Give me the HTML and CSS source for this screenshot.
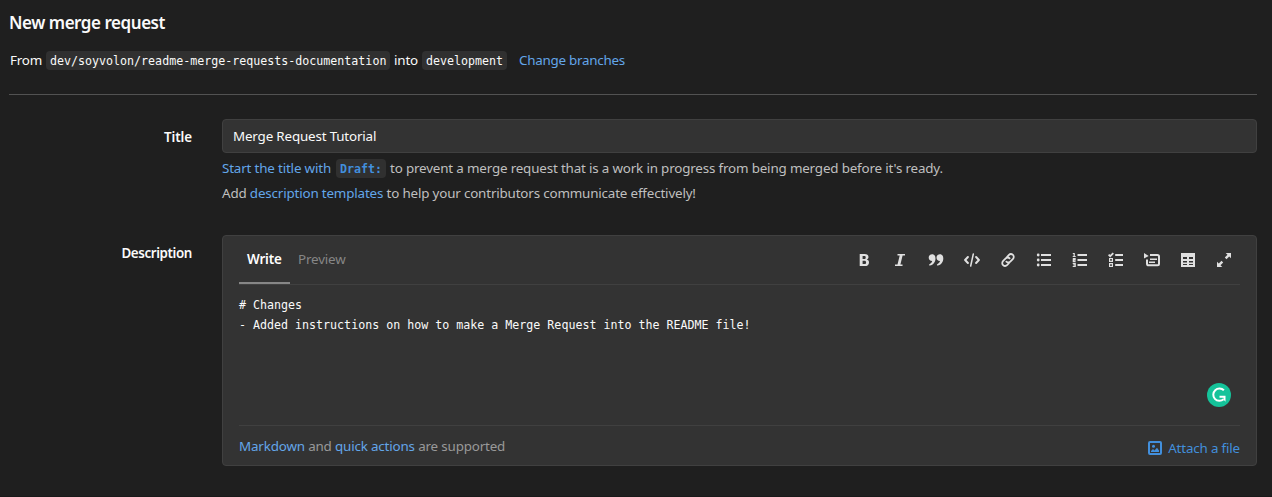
FILE: index.html
```html
<!DOCTYPE html>
<html lang="en">
<head>
<meta charset="utf-8">
<title>New merge request</title>
<link rel="stylesheet" href="styles.css">
</head>
<body>
<main class="page">
  <h1 class="page-title">New merge request</h1>
  <div class="branches"><span class="from">From</span><code class="code source">dev/soyvolon/readme-merge-requests-documentation</code><span class="into">into</span><code class="code target">development</code><a class="link change">Change branches</a></div>
  <form class="form">
    <div class="row title-row">
      <label class="label title-label">Title</label>
      <div class="field">
        <div class="input">Merge Request Tutorial</div>
        <p class="hint"><a class="link start">Start the title with</a><code class="code draft">Draft:</code><span class="prevent">to prevent a merge request that is a work in progress from being merged before it's ready.</span></p>
        <p class="hint second">Add <a class="link">description templates</a> to help your contributors communicate effectively!</p>
      </div>
    </div>
    <div class="row">
      <label class="label">Description</label>
      <div class="editor">
        <div class="header">
          <div class="tab active">Write</div>
          <div class="tab">Preview</div>
          <div class="toolbar">
            <svg class="icon" viewBox="0 0 16 16"><path fill-rule="evenodd" d="M3.7 2h5.100c2.300 0 3.700 1.100 3.700 3.100 0 1.200-.6 2-1.700 2.500 1.500.4 2.200 1.400 2.200 2.800 0 2.400-1.600 3.600-4.200 3.600H3.700zM6.600 4v2.900h1.600c1.100 0 1.500-.5 1.500-1.500S9.300 4 8.200 4zm0 4.800V12h1.800c1.200 0 1.700-.6 1.700-1.600 0-1.100-.5-1.600-1.700-1.600z"/></svg>
            <svg class="icon" viewBox="0 0 16 16"><path d="M5.500 2H13v1.600h-2.400L8.400 12.400h2.100V14H3v-1.600h2.500L7.700 3.600H5.500z"/></svg>
            <svg class="icon" viewBox="0 0 16 16"><path d="M4 2.200c2.100 0 3.500 1.500 3.500 4.100 0 3.800-2.100 6.700-5.600 7.200-.8.1-1.100-.9-.4-1.300 1.500-.7 2.400-1.800 2.700-3.200C2 9 .7 7.700.7 5.600 .7 3.600 2.100 2.200 4 2.200zM11.800 2.200c2.100 0 3.500 1.500 3.500 4.100 0 3.800-2.100 6.700-5.600 7.200-.8.1-1.100-.9-.4-1.300 1.500-.7 2.400-1.800 2.700-3.200-2.200 0-3.500-1.300-3.500-3.400 0-2 1.400-3.400 3.300-3.400z"/></svg>
            <svg class="icon line" viewBox="0 0 16 16"><path d="M3.900 5 1.100 8l2.800 3M12.100 5l2.800 3-2.800 3"/><path class="thin" d="M9.300 2 6.700 14"/></svg>
            <svg class="icon link-icon" viewBox="0 0 16 16"><path d="m6.500 5.500 2.200-2.400c1.200-1.200 3-1.300 4.200-.2s1.100 3-.1 4.200l-2.500 2.500c-1.200 1.200-2.900 1.200-3.900.1M9.500 10.500l-2.200 2.400c-1.200 1.200-3 1.300-4.200.2s-1.100-3 .1-4.200l2.500-2.500c1.200-1.200 2.900-1.200 3.900-.1"/></svg>
            <svg class="icon" viewBox="0 0 16 16"><path d="M5 2h10v2H5zm0 5h10v2H5zm0 5h10v2H5z"/><circle cx="2.200" cy="3" r="1.400"/><circle cx="2.200" cy="8" r="1.400"/><circle cx="2.200" cy="13" r="1.400"/></svg>
            <svg class="icon" viewBox="0 0 16 16"><path d="M5.500 2H15v2H5.500zm0 5H15v2H5.500zm0 5H15v2H5.500z"/><path class="stroke" d="M.8 1.500h1.400v3M.7 4.500h3M.8 6.600h2.300v1.300H1.300v1.500h2.300M.7 11.400h2.500v3.100H.7M1.300 12.900h1.900"/></svg>
            <svg class="icon" viewBox="0 0 16 16"><path d="M7.200 2H15v2H7.200zm0 5H15v2H7.200zm0 5H15v2H7.200z"/><path class="stroke check" d="m.6 2.600 1.600 1.600 3.100-3.100"/><path class="stroke" d="M1.600 6.500h2.800v2.900H1.600zM1.600 11.600h2.800v2.900H1.600z"/></svg>
            <svg class="icon" viewBox="0 0 16 16"><path d="M0 1l4.700 2.900L0 6.600zM6 6.500h7V8H6zM5 9.500h6V11H5z"/><path class="frame" d="M6 3.100h7.500q1.500 0 1.500 1.500v7.200q0 1.500-1.500 1.500h-9Q3 13.300 3 11.800V7.500"/></svg>
            <svg class="icon" viewBox="0 0 16 16"><path fill-rule="evenodd" d="M1 1h14v14H1zm2 4v2h4V5zm6 0v2h4V5zM3 9v1.500h4V9zm6 0v1.500h4V9zm-6 3v1h4v-1zm6 0v1h4v-1z"/></svg>
            <svg class="icon" viewBox="0 0 16 16"><path d="M9.700 1H15v5.300l-1.800-1.800-2.700 2.700-1.700-1.700 2.700-2.700zM1 9.700 2.800 11.500l2.700-2.700 1.700 1.700-2.700 2.700L6.300 15H1z"/></svg>
          </div>
        </div>
        <div class="textarea">
          <pre class="text"># Changes
- Added instructions on how to make a Merge Request into the README file!</pre>
          <svg class="grammar" viewBox="0 0 24 24"><circle cx="12" cy="12" r="12" fill="#15c39a"/><path d="M16.900 7.300A6.200 6.200 0 1 0 16.600 16.300" fill="none" stroke="#fff" stroke-width="2"/><path d="M12.500 12.800h6v6l-2-2.200v-1.800h-4z" fill="#fff"/></svg>
        </div>
        <div class="footer">
          <span class="support"><a class="link">Markdown</a> and <a class="link">quick actions</a> are supported</span>
          <a class="attach"><svg class="picture" viewBox="0 0 16 16"><rect x="2" y="2" width="12" height="12" rx="1" fill="none" stroke="currentColor" stroke-width="2"/><circle cx="6.500" cy="6.300" r="1.500"/><path d="M4 12v-1l2-2 1.500 1.500L10 7.700l2 2.800V12z"/></svg><span class="attach-text">Attach a file</span></a>
        </div>
      </div>
    </div>
  </form>
</main>
</body>
</html>
```
FILE: styles.css
```css
* { box-sizing: border-box; }
body {
  margin: 0;
  background: #1f1f1f;
  color: #fafafa;
  font: 13.4px/20px "Noto Sans", "Open Sans", sans-serif;
  letter-spacing: -0.17px;
}
.page { height: 497px; padding: 12px 15px 0 9px; border-bottom: 1px solid #191919; white-space: nowrap; }
.page-title { margin: 0; font-size: 17px; line-height: 22px; font-weight: 600; letter-spacing: -0.46px; }
.branches { display: flex; align-items: center; height: 20px; margin-top: 16px; padding-left: 1px; }
.code { height: 19px; padding: 0 4px; border-radius: 4px; background: #303030; font: 11.65px/20px "DejaVu Sans Mono", monospace; letter-spacing: 0; }
.link { color: #63a6e9; }
.from { width: 32px; }
.into { width: 24px; }
.change { letter-spacing: -0.25px; }
.source { width: 344px; margin: 0 4px; }
.target { width: 85px; margin: 0 12px 0 4px; }
.form { margin-top: 24px; padding-top: 24px; border-top: 1px solid #525252; }
.row { display: flex; }
.title-row { height: 116px; }
.label { width: 183px; margin-right: 30px; padding-top: 8px; font-weight: 600; text-align: right; letter-spacing: -0.4px; }
.title-label { letter-spacing: -0.1px; }
.field, .editor { width: 1035px; }
.input { height: 34px; padding: 6px 10px; border: 1px solid #404040; border-radius: 4px; background: #333; }
.hint { display: flex; align-items: center; height: 20px; margin: 5px 0 0; color: #bfbfbf; white-space: pre; }
.start { width: 110px; }
.draft { width: 50px; margin: 0 4px; color: #428fdc; font-weight: bold; }
.editor { height: 231px; padding: 0 16px; border: 1px solid #404040; border-radius: 4px; background: #333; }
.header { display: flex; height: 49px; border-bottom: 1px solid #404040; }
.tab { height: 48px; padding: 13px 8px 0; color: #868686; }
.active { width: 51px; border-bottom: 2px solid #868686; color: #fff; font-weight: 600; }
.toolbar { display: flex; gap: 20px; margin: 16px 8px 0 auto; }
.icon { display: block; width: 16px; height: 16px; fill: #e0e0e0; }
.line { fill: none; stroke: #e0e0e0; stroke-width: 2; stroke-linecap: round; stroke-linejoin: round; }
.link-icon { fill: none; stroke: #e0e0e0; stroke-width: 1.8; stroke-linecap: round; }
.thin { stroke-width: 1.5; }
.stroke { fill: none; stroke: #e0e0e0; stroke-width: 1.2; }
.check { stroke-width: 1.8; }
.frame { fill: none; stroke: #e0e0e0; stroke-width: 2; }
.textarea { display: flex; align-items: flex-end; justify-content: space-between; height: 141px; padding: 10px 9px 18px 0; border-bottom: 1px solid #404040; }
.text { align-self: flex-start; margin: 0; font: 11.65px/20px "DejaVu Sans Mono", monospace; letter-spacing: 0; }
.grammar { width: 24px; height: 24px; }
.footer { display: flex; justify-content: space-between; padding-top: 10px; color: #999; }
.attach { display: flex; gap: 5px; align-items: center; height: 24px; color: #428fdc; }
.picture { width: 16px; height: 16px; fill: currentColor; }
```
